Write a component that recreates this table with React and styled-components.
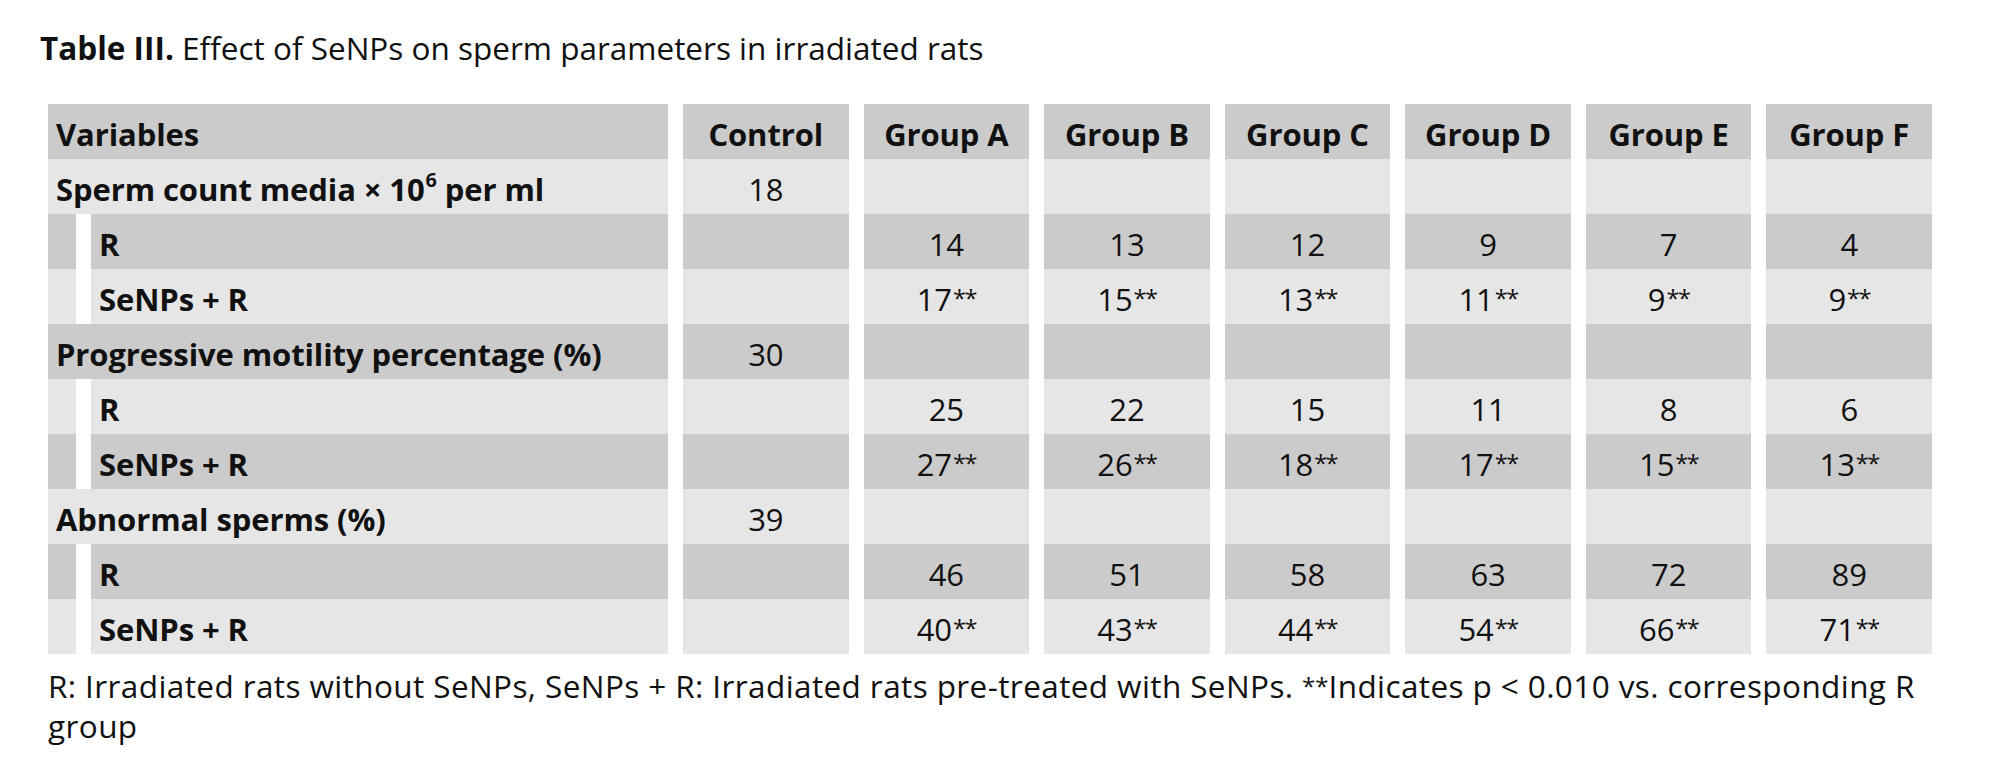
import React from "react";
import styled, { createGlobalStyle } from "styled-components";

const GlobalStyle = createGlobalStyle`
  html, body { margin: 0; padding: 0; background: #ffffff; }
  body { font-family: "Open Sans", "Liberation Sans", sans-serif; color: #111111; }
`;

const DARK = "#cbcbcb";
const LIGHT = "#e6e6e6";

const Page = styled.div`
  width: 2000px;
  padding: 24px 0 0 40px;
  box-sizing: border-box;
`;

const Caption = styled.div`
  font-size: 31.5px;
  line-height: 48px;
  margin: 0 0 32px 0;
  color: #111111;
  b { font-weight: 700; }
`;

const Table = styled.div`
  margin-left: 8px;
  width: 1884px;
  display: flex;
  flex-direction: column;
`;

const Row = styled.div`
  display: grid;
  grid-template-columns: 620px repeat(7, 1fr);
  column-gap: 15px;
  height: 55px;
`;

const Cell = styled.div`
  display: flex;
  align-items: center;
  justify-content: ${(p) => (p.$left ? "flex-start" : "center")};
  padding: 4px 0 0 ${(p) => (p.$left ? "8px" : "0")};
  box-sizing: border-box;
  background: ${(p) => (p.$dark ? DARK : LIGHT)};
  font-size: 31px;
  letter-spacing: -0.1px;
  font-weight: ${(p) => (p.$bold ? 700 : 400)};
  white-space: nowrap;
`;

const SubLabel = styled(Cell)`
  padding-left: 51px;
  background: ${(p) => {
    const c = p.$dark ? DARK : LIGHT;
    return `linear-gradient(to right, ${c} 0 28px, #ffffff 28px 43px, ${c} 43px)`;
  }};
`;

const Text = styled.span`
  display: inline-block;
`;

const Stars = styled.span`
  font-size: 0.76em;
  line-height: 0;
  position: relative;
  top: -0.14em;
  letter-spacing: ${(p) => (p.$tight ? "-1.5px" : "0")};
  margin-left: ${(p) => (p.$tight ? "1px" : "0")};
`;

const Sup = styled.sup`
  font-size: 0.64em;
  position: relative;
  top: -0.1em;
  vertical-align: super;
  line-height: 0;
  margin-left: 1px;
`;

const Note = styled.p`
  margin: 12px 0 0 8px;
  width: 1884px;
  font-size: 31.5px;
  line-height: 40px;
  letter-spacing: 0.4px;
  color: #111111;
`;

const groups = ["Group A", "Group B", "Group C", "Group D", "Group E", "Group F"];

const sections = [
  {
    label: (
      <>
        Sperm count media × 10<Sup>6</Sup> per ml
      </>
    ),
    control: "18",
    r: ["14", "13", "12", "9", "7", "4"],
    s: ["17", "15", "13", "11", "9", "9"],
  },
  {
    label: "Progressive motility percentage (%)",
    control: "30",
    r: ["25", "22", "15", "11", "8", "6"],
    s: ["27", "26", "18", "17", "15", "13"],
  },
  {
    label: "Abnormal sperms (%)",
    control: "39",
    r: ["46", "51", "58", "63", "72", "89"],
    s: ["40", "43", "44", "54", "66", "71"],
  },
];

function Value({ v, star }) {
  return (
    <Text>
      {v}
      {star && <Stars $tight>**</Stars>}
    </Text>
  );
}

export default function App() {
  let idx = 0;
  const rows = [];
  sections.forEach((sec, si) => {
    const d0 = idx % 2 === 1;
    rows.push(
      <Row key={`m${si}`}>
        <Cell $left $bold $dark={d0}>
          <Text>{sec.label}</Text>
        </Cell>
        <Cell $dark={d0}>
          <Text>{sec.control}</Text>
        </Cell>
        {groups.map((g) => (
          <Cell key={g} $dark={d0} />
        ))}
      </Row>
    );
    idx++;
    const d1 = idx % 2 === 1;
    rows.push(
      <Row key={`r${si}`}>
        <SubLabel $left $bold $dark={d1}>
          <Text>R</Text>
        </SubLabel>
        <Cell $dark={d1} />
        {sec.r.map((v, i) => (
          <Cell key={i} $dark={d1}>
            <Value v={v} />
          </Cell>
        ))}
      </Row>
    );
    idx++;
    const d2 = idx % 2 === 1;
    rows.push(
      <Row key={`s${si}`}>
        <SubLabel $left $bold $dark={d2}>
          <Text>SeNPs + R</Text>
        </SubLabel>
        <Cell $dark={d2} />
        {sec.s.map((v, i) => (
          <Cell key={i} $dark={d2}>
            <Value v={v} star />
          </Cell>
        ))}
      </Row>
    );
    idx++;
  });

  return (
    <Page>
      <GlobalStyle />
      <Caption>
        <b>Table III.</b> Effect of SeNPs on sperm parameters in irradiated rats
      </Caption>
      <Table>
        <Row>
          <Cell $left $bold $dark>
            <Text>Variables</Text>
          </Cell>
          <Cell $bold $dark>
            <Text>Control</Text>
          </Cell>
          {groups.map((g) => (
            <Cell key={g} $bold $dark>
              <Text>{g}</Text>
            </Cell>
          ))}
        </Row>
        {rows}
      </Table>
      <Note>
        R: Irradiated rats without SeNPs, SeNPs + R: Irradiated rats pre-treated with SeNPs.{" "}
        <Stars>**</Stars>Indicates p &lt; 0.010 vs. corresponding R group
      </Note>
    </Page>
  );
}
